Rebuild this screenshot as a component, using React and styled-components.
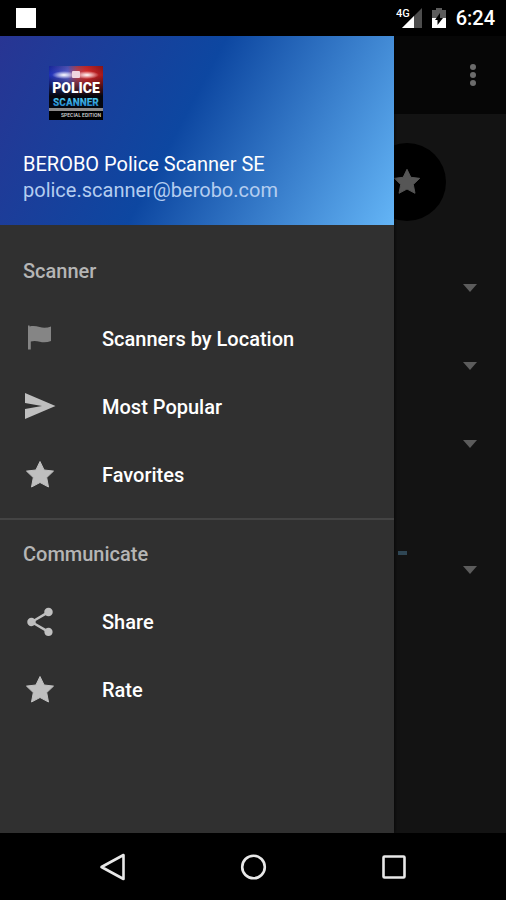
import React, { useState } from 'react';
import styled, { createGlobalStyle } from 'styled-components';
import { MdShare } from 'react-icons/md';

const GlobalStyle = createGlobalStyle`
  * {
    box-sizing: border-box;
  }
  body {
    margin: 0;
    background: #000;
    font-family: Roboto, "Liberation Sans", sans-serif;
    font-size: 20px;
    line-height: 26px;
  }
`;

const FlagIcon = () => (
  <svg viewBox="0 0 34 34" aria-hidden="true">
    <path
      fill="#858585"
      d="M5 3.500h1.600v1c3.400-.7 6.600-.4 10 .6 4 1.100 8 .7 11.400-.6v14.500c-3.600 1.500-7.600 1.700-11.200.8-3.500-.9-6.500-1-9-.2v8H5z"
    />
  </svg>
);

const SendIcon = () => (
  <svg viewBox="0 0 34 34" aria-hidden="true">
    <path fill="currentColor" d="M2 3l30.500 13L2 29V19l17-3L2 13z" />
  </svg>
);

const StarIcon = () => (
  <svg viewBox="0 0 34 34" aria-hidden="true">
    <path
      fill="currentColor"
      stroke="currentColor"
      strokeWidth="1"
      strokeLinejoin="round"
      d="M17 3.500l4.100 8.500 9.400 1.100-6.800 6.500 1.800 9.400-8.500-4.500L8.500 29l1.800-9.400-6.800-6.500L12.900 12z"
    />
  </svg>
);

const sections = [
  {
    title: 'Scanner',
    items: [
      { label: 'Scanners by Location', icon: <FlagIcon /> },
      { label: 'Most Popular', icon: <SendIcon /> },
      { label: 'Favorites', icon: <StarIcon /> },
    ],
  },
  {
    title: 'Communicate',
    items: [
      { label: 'Share', icon: <MdShare /> },
      { label: 'Rate', icon: <StarIcon /> },
    ],
  },
];

function Logo() {
  return (
    <LogoArt viewBox="0 0 54 54" role="img" aria-label="Police Scanner">
      <defs>
        <linearGradient id="siren">
          <stop offset="0" stopColor="#1c2fb8" />
          <stop offset="0.35" stopColor="#5b5fd0" />
          <stop offset="0.52" stopColor="#c0485c" />
          <stop offset="0.7" stopColor="#e32b2b" />
          <stop offset="1" stopColor="#a5191c" />
        </linearGradient>
        <linearGradient id="shade" x2="0" y2="1">
          <stop offset="0" stopColor="#05070f" stopOpacity="0.2" />
          <stop offset="0.3" stopColor="#05070f" stopOpacity="0" />
          <stop offset="1" stopColor="#05070f" />
        </linearGradient>
        <radialGradient id="glow">
          <stop offset="0" stopColor="#fff" />
          <stop offset="1" stopColor="#fff" stopOpacity="0" />
        </radialGradient>
        <linearGradient id="cyan" x2="0" y2="1">
          <stop offset="0" stopColor="#55d3f2" />
          <stop offset="1" stopColor="#1673c4" />
        </linearGradient>
      </defs>
      <rect width="54" height="54" fill="#05070f" />
      <rect width="54" height="30" fill="url(#siren)" />
      <rect width="54" height="30" fill="url(#shade)" />
      <ellipse cx="15" cy="9" rx="12" ry="4" fill="url(#glow)" />
      <ellipse cx="38" cy="9" rx="12" ry="4" fill="url(#glow)" />
      <rect x="23" y="5" width="8" height="7" rx="1" fill="#f0d5e0" />
      <text x="27" y="27" textAnchor="middle" fontSize="14" fontWeight="900" fill="#fff">POLICE</text>
      <text x="27" y="40" textAnchor="middle" fontSize="10" fontWeight="900" fill="url(#cyan)">SCANNER</text>
      <rect y="42" width="54" height="3" fill="#8d8b8b" />
      <rect y="45" width="54" height="9" fill="#000" />
      <text x="52" y="51" textAnchor="end" fontSize="5" fontWeight="500" fill="#ddd">SPECIAL EDITION</text>
    </LogoArt>
  );
}

function StatusBar() {
  return (
    <StatusRow>
      <Notification />
      <StatusIcons>
        <svg width="26" height="22" viewBox="0 0 26 22" role="img" aria-label="Signal">
          <path d="M26 1v20H6z" fill="#4d4d4d" />
          <path d="M18 9v12H6z" fill="#fff" />
          <path d="M0 0h14v9l-3 3H0z" fill="#000" />
          <text x="0" y="10" fontSize="11" fontWeight="500" fill="#fff">4G</text>
        </svg>
        <svg width="14" height="22" viewBox="0 0 14 22" role="img" aria-label="Battery charging">
          <path d="M4 1h6v2h4v8H0V3h4z" fill="#5c5c5c" />
          <path d="M0 11h14v10H0z" fill="#fff" />
          <path d="M8 6v5h3l-5.500 7v-5H3z" fill="#000" />
        </svg>
        <Clock>6:24</Clock>
      </StatusIcons>
    </StatusRow>
  );
}

function FilterSelect({ name }) {
  return (
    <Filter>
      <FilterInput aria-label={name}>
        <option aria-label="Any" />
      </FilterInput>
      <svg width="14" height="8" viewBox="0 0 14 8" aria-hidden="true">
        <path d="M0 0h14L7 8z" fill="#5c5c5c" />
      </svg>
    </Filter>
  );
}

function NavButton({ children, ...rest }) {
  return (
    <NavKey {...rest}>
      <svg
        width="32"
        height="32"
        viewBox="0 0 32 32"
        fill="none"
        stroke="#e8e8e8"
        strokeWidth="2.600"
        strokeLinejoin="round"
        aria-hidden="true"
      >
        {children}
      </svg>
    </NavKey>
  );
}

export default function App() {
  const [selected, setSelected] = useState('');

  return (
    <Screen>
      <GlobalStyle />
      <StatusBar />
      <Stage>
        <Page>
          <AppBar>
            <MoreButton type="button" aria-label="More options">
              <svg width="8" height="24" viewBox="0 0 8 24" aria-hidden="true">
                <g fill="#6b6b6b">
                  <circle cx="4" cy="4" r="3" />
                  <circle cx="4" cy="12" r="3" />
                  <circle cx="4" cy="20" r="3" />
                </g>
              </svg>
            </MoreButton>
          </AppBar>
          <Actions>
            <RoundButton type="button" aria-label="Add to favorites">
              <StarIcon />
            </RoundButton>
          </Actions>
          <FilterSelect name="Country" />
          <FilterSelect name="State" />
          <FilterSelect name="County" />
          <TitleGap>
            <TitleMark />
          </TitleGap>
          <FilterSelect name="Scanner" />
        </Page>
        <Drawer>
          <Account>
            <Logo />
            <AccountName>BEROBO Police Scanner SE</AccountName>
            <AccountMail href="mailto:police.scanner@berobo.com">
              police.scanner@berobo.com
            </AccountMail>
          </Account>
          {sections.map(({ title, items }) => (
            <Section key={title}>
              <SectionTitle>{title}</SectionTitle>
              {items.map(({ label, icon }) => (
                <Item
                  key={label}
                  type="button"
                  aria-pressed={selected === label}
                  onClick={() => setSelected(label)}
                >
                  {icon}
                  {label}
                </Item>
              ))}
            </Section>
          ))}
        </Drawer>
      </Stage>
      <NavBar>
        <NavButton type="button" aria-label="Back">
          <path d="M26.500 4v24L4.500 16z" />
        </NavButton>
        <NavButton type="button" aria-label="Home">
          <circle cx="16.500" cy="16" r="11.300" />
        </NavButton>
        <NavButton type="button" aria-label="Recent apps">
          <rect x="6.500" y="5.500" width="21" height="21" rx="1" />
        </NavButton>
      </NavBar>
    </Screen>
  );
}

// Style components
const Screen = styled.div`
  display: flex;
  flex-direction: column;
  min-height: 100vh;
`;

const StatusRow = styled.header`
  display: flex;
  align-items: center;
  justify-content: space-between;
  height: 36px;
  padding: 0 11px 0 16px;
`;

const Notification = styled.span`
  width: 20px;
  height: 20px;
  background: #fff;
`;

const StatusIcons = styled.div`
  display: flex;
  align-items: center;
  gap: 10px;
`;

const Clock = styled.time`
  color: #fff;
  font-weight: 500;
`;

// the page and the drawer share one cell, the drawer lies on top
const Stage = styled.div`
  display: grid;
  flex: 1;
`;

const Page = styled.main`
  grid-area: 1 / 1;
  background: #131313;
`;

const AppBar = styled.div`
  display: flex;
  align-items: center;
  justify-content: flex-end;
  height: 78px;
  padding: 0 21px;
  background: #060606;
`;

const MoreButton = styled.button`
  display: flex;
  padding: 8px;
  border: 0;
  background: none;
`;

const Actions = styled.div`
  display: flex;
  justify-content: flex-end;
  padding: 29px 60px 28px;
`;

const RoundButton = styled.button`
  display: flex;
  align-items: center;
  justify-content: center;
  width: 78px;
  height: 78px;
  padding: 0;
  border: 0;
  border-radius: 50%;
  background: #000;
  color: #565656;

  svg {
    width: 32px;
  }
`;

const Filter = styled.div`
  display: flex;
  align-items: center;
  height: 78px;
  padding-right: 29px;
`;

const FilterInput = styled.select`
  flex: 1;
  height: 48px;
  border: 0;
  appearance: none;
  background: none;
  color: #5c5c5c;
`;

const TitleGap = styled.div`
  display: flex;
  align-items: flex-end;
  justify-content: flex-end;
  height: 48px;
`;

const TitleMark = styled.span`
  width: 9px;
  height: 4px;
  margin: 0 99px -24px 0;
  background: #2f4654;
`;

const Drawer = styled.nav`
  grid-area: 1 / 1;
  width: 394px;
  max-width: 78vw;
  background: #303030;
  box-shadow: 0 0 4px #000;
`;

const Account = styled.div`
  display: flex;
  flex-direction: column;
  align-items: flex-start;
  height: 189px;
  padding: 30px 23px 0;
  background: linear-gradient(118deg, #283593, #0d47a1 46%, #64b5f6);
`;

const LogoArt = styled.svg`
  width: 54px;
  height: 54px;
  margin: 0 26px 31px;
`;

const AccountName = styled.span`
  color: #fff;
`;

const AccountMail = styled.a`
  color: #b4cdf0;
  text-decoration: none;
`;

const Section = styled.section`
  padding: 12px 0 9px;

  & + & {
    padding-top: 0;
    border-top: 2px solid #444;
  }
`;

const SectionTitle = styled.h2`
  margin: 0;
  padding: 0 23px;
  color: #b5b5b5;
  font-size: 20px;
  font-weight: 500;
  line-height: 68px;
`;

const Item = styled.button`
  display: flex;
  align-items: center;
  gap: 45px;
  width: 100%;
  height: 68px;
  padding: 0 23px;
  border: 0;
  background: none;
  color: #fff;
  font: inherit;
  font-weight: 500;
  text-align: left;

  svg {
    width: 34px;
    height: 34px;
    color: #bfbfbf;
  }
`;

const NavBar = styled.footer`
  display: flex;
  justify-content: center;
  gap: 76px;
  height: 67px;
`;

const NavKey = styled.button`
  display: flex;
  align-items: center;
  justify-content: center;
  width: 64px;
  padding: 0;
  border: 0;
  background: none;
`;
